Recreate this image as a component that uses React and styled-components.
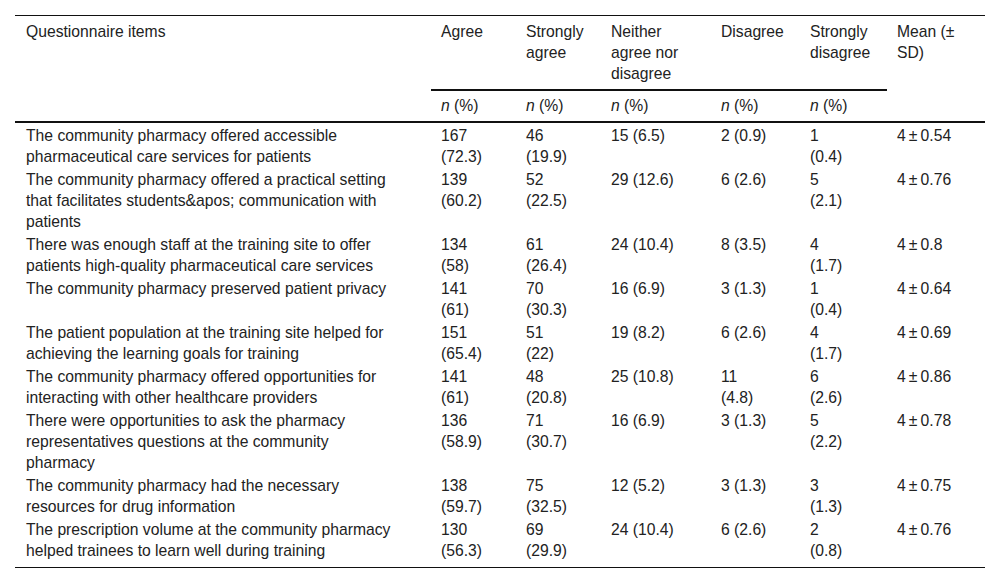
import styled, { createGlobalStyle } from 'styled-components'

const GlobalStyle = createGlobalStyle`
  html, body {
    margin: 0;
    padding: 0;
    background: #fff;
  }
  body {
    font-family: "Liberation Sans", Arial, Helvetica, sans-serif;
    color: #222;
  }
`

const Wrapper = styled.div`
  padding: 15px;
`

const Table = styled.table`
  width: 970px;
  table-layout: fixed;
  border-collapse: separate;
  border-spacing: 0;
  border-top: 1px solid #111;
  border-bottom: 1px solid #111;
  font-size: 15.7px;
  line-height: 21px;
`

const HeadCell = styled.th`
  text-align: left;
  font-weight: normal;
  vertical-align: top;
  padding: ${(p) => (p.$sub ? '4px 10px 5px' : '5px 10px 5px')};
  padding-left: ${(p) => (p.$first ? '11px' : '10px')};
  border-bottom: ${(p) => (p.$rule ? '2px solid #111' : 'none')};
`

const Cell = styled.td`
  vertical-align: top;
  white-space: pre-line;
  padding: 2px 10px ${(p) => (p.$last ? '6px' : '0')};
  padding-left: ${(p) => (p.$first ? '11px' : '10px')};
`

const Em = styled.i`
  font-style: italic;
`

const widths = [416, 85, 85, 110, 89, 87, 98]

const columns = ['Agree', 'Strongly agree', 'Neither agree nor disagree', 'Disagree', 'Strongly disagree']

const rows = [
  ['The community pharmacy offered accessible\npharmaceutical care services for patients', '167\n(72.3)', '46\n(19.9)', '15 (6.5)', '2 (0.9)', '1\n(0.4)', '0.54'],
  ['The community pharmacy offered a practical setting\nthat facilitates students&apos; communication with\npatients', '139\n(60.2)', '52\n(22.5)', '29 (12.6)', '6 (2.6)', '5\n(2.1)', '0.76'],
  ['There was enough staff at the training site to offer\npatients high-quality pharmaceutical care services', '134\n(58)', '61\n(26.4)', '24 (10.4)', '8 (3.5)', '4\n(1.7)', '0.8'],
  ['The community pharmacy preserved patient privacy', '141\n(61)', '70\n(30.3)', '16 (6.9)', '3 (1.3)', '1\n(0.4)', '0.64'],
  ['The patient population at the training site helped for\nachieving the learning goals for training', '151\n(65.4)', '51\n(22)', '19 (8.2)', '6 (2.6)', '4\n(1.7)', '0.69'],
  ['The community pharmacy offered opportunities for\ninteracting with other healthcare providers', '141\n(61)', '48\n(20.8)', '25 (10.8)', '11\n(4.8)', '6\n(2.6)', '0.86'],
  ['There were opportunities to ask the pharmacy\nrepresentatives questions at the community\npharmacy', '136\n(58.9)', '71\n(30.7)', '16 (6.9)', '3 (1.3)', '5\n(2.2)', '0.78'],
  ['The community pharmacy had the necessary\nresources for drug information', '138\n(59.7)', '75\n(32.5)', '12 (5.2)', '3 (1.3)', '3\n(1.3)', '0.75'],
  ['The prescription volume at the community pharmacy\nhelped trainees to learn well during training', '130\n(56.3)', '69\n(29.9)', '24 (10.4)', '6 (2.6)', '2\n(0.8)', '0.76'],
]

function App() {
  return (
    <Wrapper>
      <GlobalStyle />
      <Table>
        <colgroup>
          {widths.map((w, i) => (
            <col key={i} style={{ width: w }} />
          ))}
        </colgroup>
        <thead>
          <tr>
            <HeadCell rowSpan={2} $first $rule>
              Questionnaire items
            </HeadCell>
            {columns.map((c) => (
              <HeadCell key={c} $rule>
                {c}
              </HeadCell>
            ))}
            <HeadCell rowSpan={2} $rule>
              Mean (± SD)
            </HeadCell>
          </tr>
          <tr>
            {columns.map((c) => (
              <HeadCell key={c} $sub $rule>
                <Em>n</Em> (%)
              </HeadCell>
            ))}
          </tr>
        </thead>
        <tbody>
          {rows.map((r, i) => {
            const last = i === rows.length - 1
            return (
              <tr key={i}>
                {r.slice(0, 6).map((v, j) => (
                  <Cell key={j} $first={j === 0} $last={last}>
                    {v}
                  </Cell>
                ))}
                <Cell $last={last}>{`4\u2009±\u2009${r[6]}`}</Cell>
              </tr>
            )
          })}
        </tbody>
      </Table>
    </Wrapper>
  )
}

export default App
